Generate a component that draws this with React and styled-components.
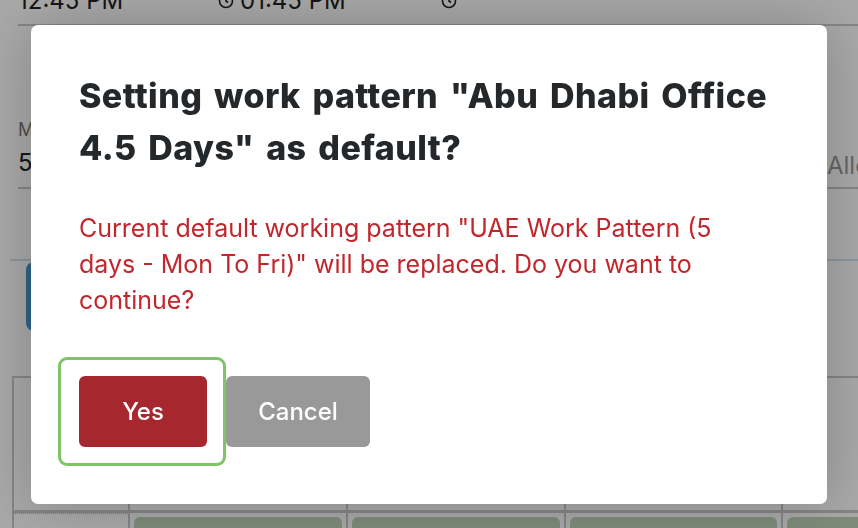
import React from 'react';
import styled, { createGlobalStyle } from 'styled-components';

const Global = createGlobalStyle`
  html, body {
    margin: 0;
    padding: 0;
    background: #ffffff;
    overflow: hidden;
  }
  body {
    font-family: Inter, Lato, "Liberation Sans", sans-serif;
  }
`;

const Page = styled.div`
  width: 858px;
  height: 528px;
  overflow: hidden;
  padding: 0 0 0 10px;
  box-sizing: border-box;
`;

const TimeRow = styled.div`
  display: flex;
  align-items: center;
  margin: -14px 0 0 8px;
  padding-bottom: 9px;
  border-bottom: 2px solid #c9c9c9;
  width: 900px;
  font-size: 24px;
  color: #222;
`;

const TimeCell = styled.div`
  display: flex;
  align-items: center;
  gap: 6px;
  width: ${p => p.w}px;
`;

const Clock = () => (
  <svg width="16" height="16" viewBox="0 0 16 16" fill="none" stroke="#222" strokeWidth="1.6">
    <circle cx="8" cy="8" r="6.5" />
    <path d="M8 4.5V8l2 1.5" />
  </svg>
);

const FieldRow = styled.div`
  display: flex;
  margin: 93px 0 0 8px;
  padding-bottom: 10px;
  border-bottom: 2px solid #c9c9c9;
  width: 1000px;
`;

const Field = styled.div`
  display: flex;
  flex-direction: column;
  gap: 8px;
  width: 809px;
`;

const Label = styled.div`
  font-size: 18px;
  color: #777;
`;

const Value = styled.div`
  font-size: 24px;
  color: #222;
`;

const SideLabel = styled.div`
  align-self: flex-end;
  margin-bottom: -3px;
  font-size: 24px;
  color: #999;
`;

const Divider = styled.div`
  margin-top: 70px;
  height: 2px;
  background: #d3e2ee;
  width: 900px;
`;

const BlueButton = styled.div`
  margin: 1px 0 0 16px;
  width: 160px;
  height: 69px;
  border-radius: 8px;
  background: #4796cb;
`;

const Table = styled.div`
  margin: 45px 0 0 2px;
  border: 2px solid #c9c9c9;
  border-bottom: none;
  width: 1000px;
`;

const TableRow = styled.div`
  display: grid;
  grid-template-columns: 116px 218px 218px 217px 217px;
  height: ${p => p.h}px;
  border-bottom: ${p => (p.bb ? '3px solid #c9c9c9' : 'none')};
`;

const Cell = styled.div`
  border-right: 2px solid #c9c9c9;
  padding: ${p => (p.pill ? '4px 4px 0 4px' : '0')};
  border-top: ${p => (p.dotted ? '1px dotted #bbb' : 'none')};
`;

const Pill = styled.div`
  height: 30px;
  border-radius: 6px;
  background: #c0d4b8;
`;

const Overlay = styled.div`
  position: fixed;
  inset: 0;
  background: rgba(0, 0, 0, 0.34);
  display: flex;
  align-items: center;
  justify-content: center;
`;

const Modal = styled.div`
  width: 796px;
  box-sizing: border-box;
  background: #ffffff;
  border-radius: 7px;
  padding: 45px 48px 38px 48px;
  box-shadow: 0 0 60px rgba(0, 0, 0, 0.22);
`;

const Title = styled.h2`
  margin: 0;
  font-weight: 800;
  font-size: 34px;
  line-height: 52px;
  letter-spacing: 0.4px;
  word-spacing: 4px;
  color: #25282b;
  max-width: 710px;
`;

const Warning = styled.p`
  margin: 36px 0 0 0;
  font-size: 25px;
  line-height: 36px;
  color: #c1272d;
  max-width: 680px;
`;

const Actions = styled.div`
  display: flex;
  align-items: center;
  margin: 39px 0 0 -21px;
`;

const FocusRing = styled.div`
  border: 3px solid #7dc566;
  border-radius: 9px;
  padding: 16px 16px 16px 18px;
`;

const Button = styled.button`
  border: none;
  border-radius: 6px;
  height: 71px;
  width: ${p => p.w}px;
  font-family: Inter, Lato, sans-serif;
  font-size: 24px;
  font-weight: 500;
  color: #ffffff;
  background: ${p => (p.primary ? '#a6282e' : '#999999')};
  cursor: pointer;
`;

export default function App() {
  return (
    <>
      <Global />
      <Page>
        <TimeRow>
          <TimeCell w={200}>12:45 PM</TimeCell>
          <TimeCell w={223}><Clock />01:45 PM</TimeCell>
          <TimeCell w={200}><Clock /></TimeCell>
        </TimeRow>
        <FieldRow>
          <Field>
            <Label>Minimum</Label>
            <Value>5 Hours</Value>
          </Field>
          <SideLabel>Allowed</SideLabel>
        </FieldRow>
        <Divider />
        <BlueButton />
        <Table>
          <TableRow h={132} bb>
            <Cell /><Cell /><Cell /><Cell /><Cell />
          </TableRow>
          <TableRow h={40}>
            <Cell dotted />
            <Cell pill><Pill /></Cell>
            <Cell pill><Pill /></Cell>
            <Cell pill><Pill /></Cell>
            <Cell pill><Pill /></Cell>
          </TableRow>
        </Table>
      </Page>
      <Overlay>
        <Modal>
          <Title>Setting work pattern "Abu Dhabi Office 4.5 Days" as default?</Title>
          <Warning>
            Current default working pattern "UAE Work Pattern (5 days - Mon To Fri)" will be replaced. Do you want to continue?
          </Warning>
          <Actions>
            <FocusRing>
              <Button primary w={128}>Yes</Button>
            </FocusRing>
            <Button w={144}>Cancel</Button>
          </Actions>
        </Modal>
      </Overlay>
    </>
  );
}
